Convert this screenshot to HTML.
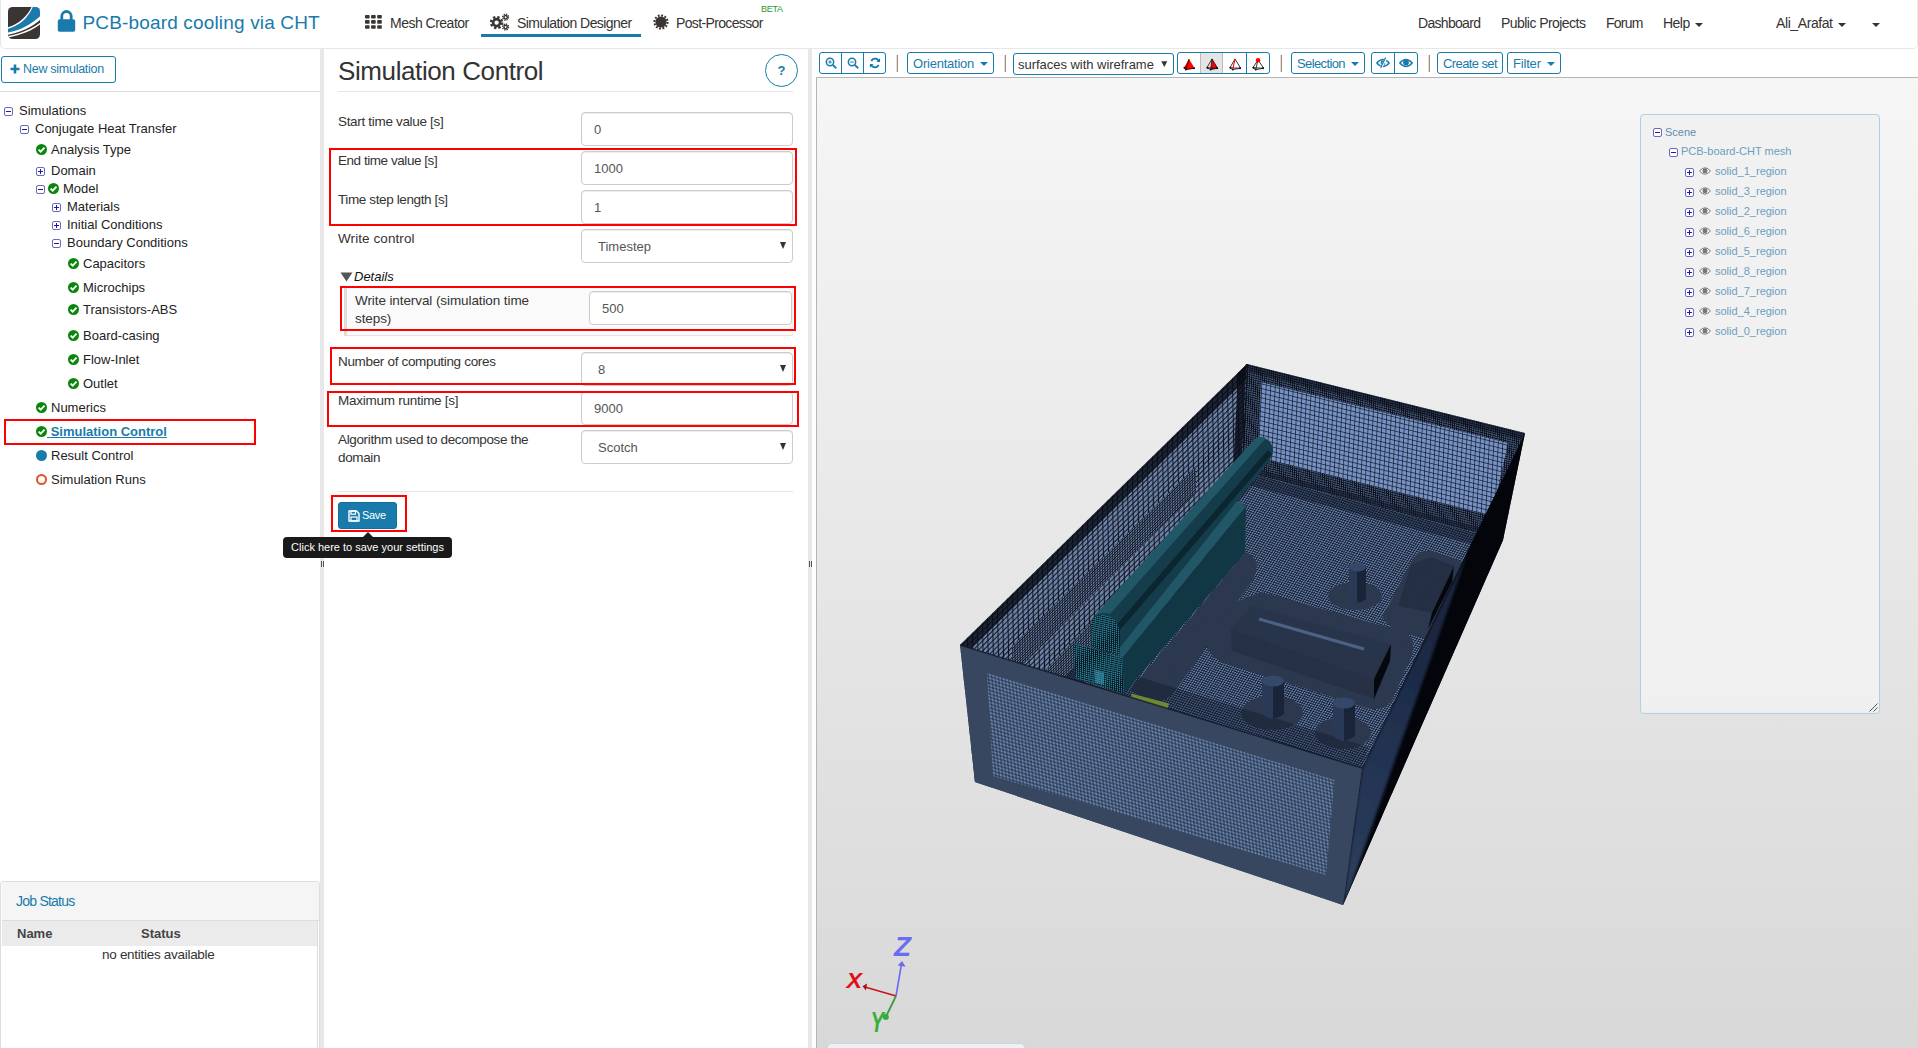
<!DOCTYPE html>
<html>
<head>
<meta charset="utf-8">
<title>SimScale</title>
<style>
*{box-sizing:border-box;margin:0;padding:0}
html,body{width:1918px;height:1048px;overflow:hidden;background:#fff;font-family:"Liberation Sans",sans-serif;font-size:13px;color:#333}
.abs{position:absolute}
#hdr{position:absolute;left:0;top:0;width:1918px;height:49px;background:#fff;border:1px solid #e7e7e7;border-top:none;border-radius:0 0 5px 5px}
.nav{position:absolute;top:14px;font-size:14px;color:#333;white-space:nowrap;line-height:18px;letter-spacing:-0.35px}
.blue{color:#187bab}
#title{position:absolute;left:82.5px;top:10px;font-size:19px;line-height:26px;color:#187bab;white-space:nowrap;letter-spacing:0.16px}
.caret{position:absolute;width:0;height:0;border-left:4px solid transparent;border-right:4px solid transparent;border-top:4px solid #333}
/* left panel */
#split1{position:absolute;left:320px;top:49px;width:4px;height:999px;background:#e8e8e8}
#split2{position:absolute;left:808px;top:49px;width:4px;height:999px;background:#e8e8e8}
.tr{position:absolute;white-space:nowrap;font-size:13px;line-height:16px;color:#222}
.ex{position:absolute;width:9px;height:9px;border:1px solid #6a6ab8;border-radius:2px;background:#fff}
.ex:before{content:"";position:absolute;left:1px;top:3px;width:5px;height:1px;background:#1a1ab0}
.ex.p:after{content:"";position:absolute;left:3px;top:1px;width:1px;height:5px;background:#1a1ab0}
.ck{position:absolute;width:11px;height:11px;border-radius:50%;background:#0a8a0a}
.red{position:absolute;border:2px solid #f00}
/* form */
.lb{position:absolute;margin-top:1px;left:338px;font-size:13.5px;line-height:18px;color:#333;letter-spacing:-0.3px;white-space:nowrap}
.in{position:absolute;left:581px;width:212px;height:34px;border:1px solid #ccc;border-radius:4px;background:#fff;box-shadow:inset 0 1px 1px rgba(0,0,0,.075);font-size:13px;line-height:33px;padding-left:12px;color:#555}
.sel{padding-left:16px}
.sel:after{content:"";position:absolute;right:6px;top:12px;border-left:3.5px solid transparent;border-right:3.5px solid transparent;border-top:7px solid #333}
/* toolbar */
.tb{position:absolute;top:52px;height:22px;border:1px solid #187bab;border-radius:3px;background:#fff;color:#187bab;font-size:13px;line-height:22px;white-space:nowrap;letter-spacing:-0.1px}
.sep{position:absolute;top:55px;width:2px;height:17px;background:linear-gradient(90deg,#fbdcb4 50%,#908ca6 50%)}
.st{position:absolute;white-space:nowrap;font-size:11px;line-height:14px;color:#6a9fc0}
</style>
</head>
<body>
<!-- HEADER -->
<div id="hdr"></div>
<div id="title">PCB-board cooling via CHT</div>
<div class="nav" style="left:390px;letter-spacing:-0.51px">Mesh Creator</div>
<div class="nav" style="left:517px;letter-spacing:-0.56px">Simulation Designer</div>
<div class="abs" style="left:481px;top:34px;width:160px;height:3px;background:#187bab"></div>
<div class="nav" style="left:676px;letter-spacing:-0.64px">Post-Processor</div>
<div class="abs" style="left:761px;top:4px;font-size:9px;line-height:10px;color:#2a9a2a;letter-spacing:-0.26px">BETA</div>
<div class="nav" style="left:1418px;letter-spacing:-0.69px">Dashboard</div>
<div class="nav" style="left:1501px;letter-spacing:-0.55px">Public Projects</div>
<div class="nav" style="left:1606px;letter-spacing:-0.79px">Forum</div>
<div class="nav" style="left:1663px;letter-spacing:-0.53px">Help</div>
<div class="caret" style="left:1695px;top:23px"></div>
<div class="nav" style="left:1776px;letter-spacing:-0.41px">Ali_Arafat</div>
<div class="caret" style="left:1838px;top:23px"></div>
<div class="caret" style="left:1872px;top:23px"></div>


<!-- HEADER ICONS -->
<svg class="abs" style="left:8px;top:7px" width="32" height="32" viewBox="0 0 32 32">
<defs><clipPath id="lg"><rect x="0" y="0" width="32" height="32" rx="4.5"/></clipPath></defs>
<g clip-path="url(#lg)"><rect width="32" height="32" fill="#3a3533"/>
<path d="M0 20.300 C10 17.500 19 10 23.500 0 L32 0 L32 13 C24 20 12 25.500 0 27.800 Z" fill="#fff"/>
<path d="M0 21.800 C10.500 19 20 11.500 24.800 0 L32 0 L32 9.300 C23 17.500 12 23.500 0 25.600 Z" fill="#187bab"/>
<path d="M0 29 C13 26.500 25 21.500 32 15.800 L32 17.400 C25 23 13 28 0 30.400 Z" fill="#fff"/>
</g></svg>
<svg class="abs" style="left:56.5px;top:9px" width="19" height="24" viewBox="0 0 19 24"><path d="M4.8 11 V7.2 A4.7 4.7 0 0 1 14.2 7.2 V11" fill="none" stroke="#187bab" stroke-width="2.8"/><rect x="0.8" y="10.2" width="17.4" height="12.6" rx="1.8" fill="#187bab"/></svg>
<svg class="abs" style="left:365px;top:15px" width="17" height="14" viewBox="0 0 17 14"><g fill="#3a3533"><rect x="0" y="0" width="4.6" height="3.6" rx=".8"/><rect x="6.1" y="0" width="4.6" height="3.6" rx=".8"/><rect x="12.2" y="0" width="4.6" height="3.6" rx=".8"/><rect x="0" y="5.1" width="4.6" height="3.6" rx=".8"/><rect x="6.1" y="5.1" width="4.6" height="3.6" rx=".8"/><rect x="12.2" y="5.1" width="4.6" height="3.6" rx=".8"/><rect x="0" y="10.2" width="4.6" height="3.6" rx=".8"/><rect x="6.1" y="10.2" width="4.6" height="3.6" rx=".8"/><rect x="12.2" y="10.2" width="4.6" height="3.6" rx=".8"/></g></svg>
<svg class="abs" style="left:490px;top:13px" width="20" height="18" viewBox="0 0 20 18">
<g fill="none" stroke="#3a3533"><circle cx="6.6" cy="9.6" r="3.5" stroke-width="2.6"/><circle cx="6.6" cy="9.6" r="5.6" stroke-width="2.2" stroke-dasharray="2.4 2"/>
<circle cx="15.6" cy="4.2" r="1.7" stroke-width="1.5"/><circle cx="15.6" cy="4.2" r="3" stroke-width="1.3" stroke-dasharray="1.3 1.05"/>
<circle cx="15.6" cy="14" r="1.7" stroke-width="1.5"/><circle cx="15.6" cy="14" r="3" stroke-width="1.3" stroke-dasharray="1.3 1.05"/></g></svg>
<svg class="abs" style="left:653px;top:14px" width="16" height="16" viewBox="0 0 16 16"><circle cx="8" cy="8" r="5.6" fill="#3a3533"/><circle cx="8" cy="8" r="6.6" fill="none" stroke="#3a3533" stroke-width="2" stroke-dasharray="1.9 1.55"/></svg>
<svg class="abs" style="left:10px;top:64px" width="10" height="10"><path d="M5 0.5 V9.5 M0.5 5 H9.5" stroke="#187bab" stroke-width="2.6"/></svg>

<!-- LEFT PANEL -->
<div class="abs blue" style="left:1px;top:56px;width:115px;height:27px;border:1px solid #187bab;border-radius:3px;font-size:12.5px;line-height:25px;padding-left:21px;letter-spacing:-0.28px">New simulation</div>
<div class="abs" style="left:0;top:91px;width:320px;height:1px;background:#ddd"></div>
<div id="split1"></div>
<div id="split2"></div>

<!-- TREE -->
<div class="ex" style="left:4px;top:107px"></div>
<div class="tr" style="left:19px;top:103px">Simulations</div>
<div class="ex" style="left:20px;top:125px"></div>
<div class="tr" style="left:35px;top:121px">Conjugate Heat Transfer</div>
<svg class="abs" style="left:36px;top:144px" width="11" height="11" viewBox="0 0 11 11"><circle cx="5.5" cy="5.5" r="5.5" fill="#0b860b"/><path d="M2.6 5.6 L4.7 7.6 L8.5 3.7" fill="none" stroke="#fff" stroke-width="1.9"/></svg>
<div class="tr" style="left:51px;top:142px">Analysis Type</div>
<div class="ex p" style="left:36px;top:167px"></div>
<div class="tr" style="left:51px;top:163px">Domain</div>
<div class="ex" style="left:36px;top:185px"></div>
<svg class="abs" style="left:48px;top:183px" width="11" height="11" viewBox="0 0 11 11"><circle cx="5.5" cy="5.5" r="5.5" fill="#0b860b"/><path d="M2.6 5.6 L4.7 7.6 L8.5 3.7" fill="none" stroke="#fff" stroke-width="1.9"/></svg>
<div class="tr" style="left:63px;top:181px">Model</div>
<div class="ex p" style="left:52px;top:203px"></div>
<div class="tr" style="left:67px;top:199px">Materials</div>
<div class="ex p" style="left:52px;top:221px"></div>
<div class="tr" style="left:67px;top:217px">Initial Conditions</div>
<div class="ex" style="left:52px;top:239px"></div>
<div class="tr" style="left:67px;top:235px">Boundary Conditions</div>
<svg class="abs" style="left:68px;top:258px" width="11" height="11" viewBox="0 0 11 11"><circle cx="5.5" cy="5.5" r="5.5" fill="#0b860b"/><path d="M2.6 5.6 L4.7 7.6 L8.5 3.7" fill="none" stroke="#fff" stroke-width="1.9"/></svg>
<div class="tr" style="left:83px;top:256px">Capacitors</div>
<svg class="abs" style="left:68px;top:282px" width="11" height="11" viewBox="0 0 11 11"><circle cx="5.5" cy="5.5" r="5.5" fill="#0b860b"/><path d="M2.6 5.6 L4.7 7.6 L8.5 3.7" fill="none" stroke="#fff" stroke-width="1.9"/></svg>
<div class="tr" style="left:83px;top:280px">Microchips</div>
<svg class="abs" style="left:68px;top:304px" width="11" height="11" viewBox="0 0 11 11"><circle cx="5.5" cy="5.5" r="5.5" fill="#0b860b"/><path d="M2.6 5.6 L4.7 7.6 L8.5 3.7" fill="none" stroke="#fff" stroke-width="1.9"/></svg>
<div class="tr" style="left:83px;top:302px">Transistors-ABS</div>
<svg class="abs" style="left:68px;top:330px" width="11" height="11" viewBox="0 0 11 11"><circle cx="5.5" cy="5.5" r="5.5" fill="#0b860b"/><path d="M2.6 5.6 L4.7 7.6 L8.5 3.7" fill="none" stroke="#fff" stroke-width="1.9"/></svg>
<div class="tr" style="left:83px;top:328px">Board-casing</div>
<svg class="abs" style="left:68px;top:354px" width="11" height="11" viewBox="0 0 11 11"><circle cx="5.5" cy="5.5" r="5.5" fill="#0b860b"/><path d="M2.6 5.6 L4.7 7.6 L8.5 3.7" fill="none" stroke="#fff" stroke-width="1.9"/></svg>
<div class="tr" style="left:83px;top:352px">Flow-Inlet</div>
<svg class="abs" style="left:68px;top:378px" width="11" height="11" viewBox="0 0 11 11"><circle cx="5.5" cy="5.5" r="5.5" fill="#0b860b"/><path d="M2.6 5.6 L4.7 7.6 L8.5 3.7" fill="none" stroke="#fff" stroke-width="1.9"/></svg>
<div class="tr" style="left:83px;top:376px">Outlet</div>
<svg class="abs" style="left:36px;top:402px" width="11" height="11" viewBox="0 0 11 11"><circle cx="5.5" cy="5.5" r="5.5" fill="#0b860b"/><path d="M2.6 5.6 L4.7 7.6 L8.5 3.7" fill="none" stroke="#fff" stroke-width="1.9"/></svg>
<div class="tr" style="left:51px;top:400px">Numerics</div>
<svg class="abs" style="left:36px;top:426px" width="11" height="11" viewBox="0 0 11 11"><circle cx="5.5" cy="5.5" r="5.5" fill="#0b860b"/><path d="M2.6 5.6 L4.7 7.6 L8.5 3.7" fill="none" stroke="#fff" stroke-width="1.9"/></svg>
<div class="tr" style="left:47px;top:424px;color:#187bab;font-weight:bold;text-decoration:underline"><span style="white-space:pre"> </span>Simulation Control</div>
<div class="abs" style="left:36px;top:450px;width:11px;height:11px;border-radius:50%;background:#187bab"></div>
<div class="tr" style="left:51px;top:448px">Result Control</div>
<div class="abs" style="left:36px;top:474px;width:11px;height:11px;border-radius:50%;border:2px solid #e0522a;background:#fff"></div>
<div class="tr" style="left:51px;top:472px">Simulation Runs</div>
<div class="red" style="left:4px;top:419px;width:252px;height:26px"></div>
<!-- JOB STATUS -->
<div class="abs" style="left:0px;top:881px;width:320px;height:167px;border:1px solid #ddd;border-bottom:none;border-radius:4px 4px 0 0;background:#fff"></div>
<div class="abs" style="left:2px;top:882px;width:317px;height:39px;background:#f5f5f5;border-bottom:1px solid #ddd;border-radius:3px 3px 0 0"></div>
<div class="abs blue" style="left:16px;top:892px;font-size:14px;line-height:18px;letter-spacing:-0.77px;white-space:nowrap">Job Status</div>
<div class="abs" style="left:2px;top:921px;width:315px;height:25px;background:#ebebeb"></div>
<div class="abs" style="left:317px;top:921px;width:1px;height:127px;background:#ddd"></div>
<div class="abs" style="left:17px;top:926px;font-size:13px;line-height:16px;font-weight:bold;color:#444">Name</div>
<div class="abs" style="left:141px;top:926px;font-size:13px;line-height:16px;font-weight:bold;color:#444">Status</div>
<div class="abs" style="left:102px;top:946px;font-size:13.5px;line-height:18px;letter-spacing:-0.29px;white-space:nowrap;color:#333">no entities available</div>

<!-- FORM -->
<div class="abs" style="left:338px;top:54px;font-size:26px;line-height:34px;color:#333;white-space:nowrap;letter-spacing:-0.4px">Simulation Control</div>
<div class="abs blue" style="left:765px;top:54px;width:33px;height:33px;border:1px solid #187bab;border-radius:50%;text-align:center;font-size:13px;line-height:31px;font-weight:bold">?</div>
<div class="abs" style="left:338px;top:91px;width:455px;height:1px;background:#e5e5e5"></div>


<div class="lb" style="top:112px;letter-spacing:-0.32px">Start time value [s]</div>
<div class="in" style="top:112px">0</div>
<div class="lb" style="top:151px;letter-spacing:-0.45px">End time value [s]</div>
<div class="in" style="top:151px">1000</div>
<div class="lb" style="top:190px;letter-spacing:-0.38px">Time step length [s]</div>
<div class="in" style="top:190px">1</div>
<div class="lb" style="top:229px;letter-spacing:0.08px">Write control</div>
<div class="in sel" style="top:229px">Timestep</div>
<svg class="abs" style="left:340px;top:272px" width="13" height="10"><path d="M0.5 0.5 L12.5 0.5 L6.5 9.5 Z" fill="#555"/></svg>
<div class="abs" style="left:354px;top:269px;font-size:13px;line-height:16px;font-style:italic;color:#111">Details</div>
<div class="abs" style="left:344px;top:287px;width:449px;height:49px;background:#fafafa;border-left:3px solid #ddd;border-bottom:1px solid #e3e3e3;border-right:1px solid #eee"></div>
<div class="lb" style="left:355px;top:291px;white-space:normal;width:200px;letter-spacing:-0.09px">Write interval (simulation time steps)</div>
<div class="in" style="left:589px;top:291px;width:203px">500</div>
<div class="lb" style="top:352px;letter-spacing:-0.33px">Number of computing cores</div>
<div class="in sel" style="top:352px">8</div>
<div class="lb" style="top:391px;letter-spacing:-0.26px">Maximum runtime [s]</div>
<div class="in" style="top:391px">9000</div>
<div class="lb" style="top:430px;white-space:normal;width:215px;letter-spacing:-0.35px">Algorithm used to decompose the domain</div>
<div class="in sel" style="top:430px">Scotch</div>
<div class="abs" style="left:338px;top:491px;width:455px;height:1px;background:#e5e5e5"></div>
<div class="abs" style="left:338px;top:502px;width:59px;height:27px;background:#187bab;border:1px solid #156e99;border-radius:3px;color:#fff;font-size:11px;line-height:25px;padding-left:23px;letter-spacing:-0.34px">Save</div>
<svg class="abs" style="left:348px;top:510px" width="12" height="12" viewBox="0 0 12 12"><path d="M1 1 H8.5 L11 3.5 V11 H1 Z" fill="none" stroke="#fff" stroke-width="1.4"/><rect x="3" y="1" width="4.5" height="3.2" fill="none" stroke="#fff" stroke-width="1.2"/><rect x="3" y="7" width="6" height="4" fill="none" stroke="#fff" stroke-width="1.2"/></svg>
<div class="red" style="left:329px;top:148px;width:468px;height:78px"></div>
<div class="red" style="left:340px;top:286px;width:456px;height:45px"></div>
<div class="red" style="left:330px;top:347px;width:466px;height:38px"></div>
<div class="red" style="left:327px;top:391px;width:472px;height:36px"></div>
<div class="red" style="left:331px;top:495px;width:76px;height:37px"></div>
<div class="abs" style="left:283px;top:537px;width:169px;height:21px;background:#1a1a1a;border-radius:4px;color:#fff;font-size:11px;line-height:21px;text-align:center;white-space:nowrap">Click here to save your settings</div>
<div class="abs" style="left:363px;top:532px;width:0;height:0;border-left:5px solid transparent;border-right:5px solid transparent;border-bottom:5px solid #1a1a1a"></div>
<div class="abs" style="left:321px;top:561px;width:1px;height:6px;background:#555"></div><div class="abs" style="left:323px;top:561px;width:1px;height:6px;background:#555"></div>
<div class="abs" style="left:809px;top:561px;width:1px;height:6px;background:#555"></div><div class="abs" style="left:811px;top:561px;width:1px;height:6px;background:#555"></div>


<!-- TOOLBAR -->
<div class="abs" style="left:812px;top:49px;width:1106px;height:28px;background:#fff"></div>
<div class="tb" style="left:819px;width:67px"></div>
<div class="abs" style="left:841px;top:52px;width:1px;height:22px;background:#187bab"></div>
<div class="abs" style="left:863px;top:52px;width:1px;height:22px;background:#187bab"></div>
<svg class="abs" style="left:825px;top:57px" width="12.5" height="12.5" viewBox="0 0 14 14"><circle cx="5.6" cy="5.6" r="4.1" fill="none" stroke="#187bab" stroke-width="1.7"/><path d="M8.7 8.7 L12.6 12.6" stroke="#187bab" stroke-width="2"/><path d="M3.6 5.6 H7.6 M5.6 3.6 V7.6" stroke="#187bab" stroke-width="1.1"/></svg>
<svg class="abs" style="left:847px;top:57px" width="12.5" height="12.5" viewBox="0 0 14 14"><circle cx="5.6" cy="5.6" r="4.1" fill="none" stroke="#187bab" stroke-width="1.7"/><path d="M8.7 8.7 L12.6 12.6" stroke="#187bab" stroke-width="2"/><path d="M3.6 5.6 H7.6" stroke="#187bab" stroke-width="1.1"/></svg>
<svg class="abs" style="left:869px;top:57px" width="12.5" height="12.5" viewBox="0 0 14 14"><path d="M11.2 5.2 A4.6 4.6 0 0 0 2.6 4.6" fill="none" stroke="#187bab" stroke-width="2"/><path d="M8.3 5.6 H12.4 V1.5 Z" fill="#187bab"/><path d="M2.2 8.2 A4.6 4.6 0 0 0 10.8 8.8" fill="none" stroke="#187bab" stroke-width="2"/><path d="M5.1 7.8 H1 V11.9 Z" fill="#187bab"/></svg>
<div class="sep" style="left:896px"></div>
<div class="tb" style="left:907px;width:87px;padding-left:5px;letter-spacing:-0.23px">Orientation</div>
<div class="caret" style="left:980px;top:62px;border-top-color:#187bab"></div>
<div class="sep" style="left:1004px"></div>
<div class="tb" style="left:1013px;top:53px;width:161px;height:22px;color:#333;font-size:13px;line-height:21px;letter-spacing:-0.03px;padding-left:4px;border-radius:3px">surfaces with wireframe</div>
<svg class="abs" style="left:1160.5px;top:61px" width="7" height="7"><path d="M0.3 0.3 H6.3 L3.3 6 Z" fill="#333"/></svg>
<div class="tb" style="left:1177px;width:93px"></div>
<div class="abs" style="left:1200px;top:53px;width:23px;height:20px;background:#e4e4e4;border-left:1px solid #bbb;border-right:1px solid #bbb"></div>
<div class="abs" style="left:1246px;top:52px;width:1px;height:22px;background:#187bab"></div>
<svg class="abs" style="left:1183px;top:57.5px" width="13" height="13" viewBox="0 0 14 14"><path d="M6.5 1 L1 10.5 L3 12.5 L12.5 11 Z" fill="#f00"/><path d="M6.5 1 L3 12.5 M1 10.5 L3 12.5 L12.5 11" fill="none" stroke="#200" stroke-width="1"/><circle cx="1.5" cy="10.5" r="1" fill="#111"/><circle cx="12" cy="11" r="1" fill="#111"/><circle cx="3" cy="12.5" r="1" fill="#111"/></svg>
<svg class="abs" style="left:1206px;top:57.5px" width="13" height="13" viewBox="0 0 14 14"><path d="M6.5 1 L5 12.5 L12.5 11 Z" fill="#f00"/><path d="M6.5 1 L1 10.5 L5 12.5 L12.5 11 Z M6.5 1 L5 12.5 M1 10.5 L12.5 11" fill="none" stroke="#111" stroke-width="0.9"/><circle cx="1.5" cy="10.5" r="1" fill="#111"/><circle cx="12" cy="11" r="1" fill="#111"/><circle cx="5" cy="12.5" r="1" fill="#111"/></svg>
<svg class="abs" style="left:1229px;top:57.5px" width="13" height="13" viewBox="0 0 14 14"><path d="M6.5 1 L1 10.5 L4 12.5 L12.5 11 Z M1 10.5 L12.5 11" fill="none" stroke="#111" stroke-width="0.9"/><path d="M6.5 1 L4 12.5" stroke="#f00" stroke-width="1.1"/><circle cx="1.5" cy="10.5" r="1" fill="#111"/><circle cx="12" cy="11" r="1" fill="#111"/><circle cx="4" cy="12.5" r="1" fill="#111"/></svg>
<svg class="abs" style="left:1252px;top:57.5px" width="13" height="13" viewBox="0 0 14 14"><path d="M6.5 2 L1 10.5 L4 12.5 L12.5 11 Z M6.5 2 L4 12.5 M1 10.5 L12.5 11" fill="none" stroke="#111" stroke-width="0.9"/><circle cx="6.5" cy="2.5" r="2.4" fill="#f00"/><circle cx="1.5" cy="10.5" r="1" fill="#111"/><circle cx="12" cy="11" r="1" fill="#111"/><circle cx="4" cy="12.5" r="1" fill="#111"/></svg>
<div class="sep" style="left:1280px"></div>
<div class="tb" style="left:1291px;width:74px;padding-left:5px;letter-spacing:-0.62px">Selection</div>
<div class="caret" style="left:1351px;top:62px;border-top-color:#187bab"></div>
<div class="tb" style="left:1371px;width:47px"></div>
<div class="abs" style="left:1394px;top:52px;width:1px;height:22px;background:#187bab"></div>
<svg class="abs" style="left:1376px;top:57px" width="14" height="12" viewBox="0 0 14 12"><path d="M0.8 6 Q7 -1 13.2 6 Q7 13 0.8 6 Z" fill="none" stroke="#187bab" stroke-width="1.3"/><circle cx="7" cy="6" r="2.4" fill="#187bab"/><path d="M10.5 0.5 L4.5 11.5" stroke="#fff" stroke-width="2.4"/><path d="M9.6 0.6 L4.6 11" stroke="#187bab" stroke-width="1.2"/></svg>
<svg class="abs" style="left:1399px;top:57px" width="14" height="12" viewBox="0 0 14 12"><path d="M0.8 6 Q7 -1 13.2 6 Q7 13 0.8 6 Z" fill="none" stroke="#187bab" stroke-width="1.4"/><circle cx="7" cy="5.6" r="2.9" fill="#187bab"/></svg>
<div class="sep" style="left:1428px"></div>
<div class="tb" style="left:1437px;width:66px;padding-left:5px;letter-spacing:-0.6px">Create set</div>
<div class="tb" style="left:1507px;width:54px;padding-left:5px;letter-spacing:-0.18px">Filter</div>
<div class="caret" style="left:1547px;top:62px;border-top-color:#187bab"></div>

<!-- VIEWER -->
<div class="abs" id="canvas" style="left:816px;top:77px;width:1102px;height:971px;border:1px solid #b5b5b5;border-right:none;border-bottom:none;background:linear-gradient(#f6f6f6,#d8d8d8)"></div>
<!-- AXES -->
<svg class="abs" style="left:0;top:0" width="1918" height="1048" viewBox="0 0 1918 1048">
<path d="M896 996 L901.5 964" stroke="#6b6bf0" stroke-width="1.6"/><path d="M897.6 965.5 L902 961 L905.6 966.8 Z" fill="#6b6bf0"/>
<path d="M896 996 L865 987" stroke="#c8141c" stroke-width="1.6"/><path d="M867 983.5 L862.5 986.2 L866 990.5 Z" fill="#b01018"/>
<path d="M896 996 L886.5 1015.5" stroke="#3a9e3a" stroke-width="1.8"/><circle cx="885.8" cy="1017" r="3" fill="#3aa83a"/>
<text transform="translate(894 955.5) scale(1 1.02)" font-family="Liberation Sans, sans-serif" font-weight="bold" font-style="italic" font-size="28" fill="#6b6bf5" textLength="17" lengthAdjust="spacingAndGlyphs">Z</text>
<text transform="translate(846.5 988.3)" font-family="Liberation Sans, sans-serif" font-weight="bold" font-style="italic" font-size="22.500" fill="#e01018" textLength="15.500" lengthAdjust="spacingAndGlyphs">X</text>
<text transform="translate(870.5 1032) scale(1 1.28)" font-family="Liberation Sans, sans-serif" font-weight="bold" font-style="italic" font-size="23" fill="#38b038" textLength="13.500" lengthAdjust="spacingAndGlyphs">Y</text>
</svg>
<div class="abs" style="left:827px;top:1043px;width:198px;height:10px;border:1px solid #bcdcea;border-radius:4px 4px 0 0;background:#f0f0f0"></div>
<!-- MODEL -->
<svg class="abs" style="left:0;top:0" width="1918" height="1048" viewBox="0 0 1918 1048">
<defs>
<pattern id="gF" width="3.6" height="3.6" patternUnits="userSpaceOnUse" patternTransform="matrix(0.956 0.293 0.109 0.994 960 645)"><rect width="3.6" height="3.6" fill="#6783b1"/><path d="M0 1.8 H3.6 M1.8 0 V3.6" stroke="#0d1118" stroke-width="0.68"/></pattern>
<pattern id="gFd" width="2.0" height="2.0" patternUnits="userSpaceOnUse" patternTransform="matrix(0.956 0.293 0.109 0.994 960 645)"><rect width="2.0" height="2.0" fill="#6680ad"/><path d="M0 1.0 H2.0 M1.0 0 V2.0" stroke="#0b0f16" stroke-width="0.61"/></pattern>
<pattern id="gB" width="4.6" height="4.6" patternUnits="userSpaceOnUse" patternTransform="matrix(0.97 0.242 -0.05 0.998 1247 364)"><rect width="4.6" height="4.6" fill="#7692c4"/><path d="M0 2.3 H4.6 M2.3 0 V4.6" stroke="#0e1320" stroke-width="0.67"/></pattern>
<pattern id="gBd" width="2.2" height="2.2" patternUnits="userSpaceOnUse" patternTransform="matrix(0.97 0.242 -0.05 0.998 1247 364)"><rect width="2.2" height="2.2" fill="#6a86b6"/><path d="M0 1.1 H2.2 M1.1 0 V2.2" stroke="#0a0e18" stroke-width="0.98"/></pattern>
<pattern id="gL" width="7.0" height="5.0" patternUnits="userSpaceOnUse" patternTransform="matrix(0.714 -0.7 0.02 1 960 645)"><rect width="7.0" height="5.0" fill="#6c82a8"/><path d="M0 2.5 H7.0 M3.5 0 V5.0" stroke="#0c1018" stroke-width="1.45"/></pattern>
<pattern id="gLd" width="3.5" height="2.5" patternUnits="userSpaceOnUse" patternTransform="matrix(0.714 -0.7 0.02 1 960 645)"><rect width="3.5" height="2.5" fill="#667ba0"/><path d="M0 1.25 H3.5 M1.75 0 V2.5" stroke="#090c14" stroke-width="1.0"/></pattern>
<pattern id="gG" width="2.4" height="2.4" patternUnits="userSpaceOnUse" patternTransform="matrix(0.95 0.31 -0.55 0.83 1241 471)"><rect width="2.4" height="2.4" fill="#6480ae"/><path d="M0 1.2 H2.4 M1.2 0 V2.4" stroke="#0b0f18" stroke-width="0.65"/></pattern>
<pattern id="gGd" width="1.7" height="1.7" patternUnits="userSpaceOnUse" patternTransform="matrix(0.95 0.31 -0.55 0.83 1241 471)"><rect width="1.7" height="1.7" fill="#607aa6"/><path d="M0 0.85 H1.7 M0.85 0 V1.7" stroke="#070a12" stroke-width="0.63"/></pattern>
<pattern id="gT" width="1.8" height="1.8" patternUnits="userSpaceOnUse" patternTransform="matrix(0.7 -0.714 0.6 0.8 1074 642)"><rect width="1.8" height="1.8" fill="#3489a3"/><path d="M0 0.9 H1.8 M0.9 0 V1.8" stroke="#05161c" stroke-width="0.46"/></pattern>
<pattern id="gTd" width="1.8" height="1.8" patternUnits="userSpaceOnUse" patternTransform="matrix(0.7 -0.714 0.02 1 1074 642)"><rect width="1.8" height="1.8" fill="#2a748c"/><path d="M0 0.9 H1.8 M0.9 0 V1.8" stroke="#030f14" stroke-width="0.6"/></pattern>
<pattern id="gTf" width="2.1" height="2.1" patternUnits="userSpaceOnUse" patternTransform="matrix(0.97 0.23 0.02 1 1074 642)"><rect width="2.1" height="2.1" fill="#2f86a2"/><path d="M0 1.05 H2.1 M1.05 0 V2.1" stroke="#04141a" stroke-width="0.78"/></pattern>
<linearGradient id="rw" gradientUnits="userSpaceOnUse" x1="1345" y1="860" x2="1460" y2="640"><stop offset="0" stop-color="#2a3c5c"/><stop offset="0.5" stop-color="#223150"/><stop offset="1" stop-color="#1a2740"/></linearGradient>
<clipPath id="cFloor"><path d="M1241.5 471 L1503 540 L1343 905 L975 782 Z"/></clipPath>
<clipPath id="cLeft"><path d="M960 645 L1247 364 L1241.5 471 L975 782 Z"/></clipPath>
<clipPath id="cBack"><path d="M1247 364 L1525 433 L1503 540 L1241.5 471 Z"/></clipPath>
<clipPath id="cRight"><path d="M1525 433 L1503 540 L1343 905 L1362 768 Z"/></clipPath>
<filter id="b1" x="-20%" y="-20%" width="140%" height="140%"><feGaussianBlur stdDeviation="1.6"/></filter>
<clipPath id="cFront"><path d="M960 645 L1362 768 L1343 905 L975 782 Z"/></clipPath>
</defs>

<!-- back wall interior -->
<path d="M1247 364 L1525 433 L1503 540 L1241.5 471 Z" fill="url(#gBd)"/>
<path d="M1261 382 L1508 443 L1492 516 L1258 457 Z" fill="url(#gB)"/>
<g clip-path="url(#cBack)"><path d="M1241.5 471 L1503 540" stroke="#131b2c" stroke-width="12" opacity=".55"/>
<path d="M1247 364 L1525 433" stroke="#0a0f1a" stroke-width="14" opacity=".45"/></g>
<path d="M1247 364 L1241.5 471" stroke="#0b111e" stroke-width="2.5"/>

<!-- left wall interior -->
<path d="M960 645 L1247 364 L1241.5 471 L975 782 Z" fill="url(#gL)"/>
<g clip-path="url(#cLeft)">
<path d="M1012 646 L1196 466 L1196 492 L1012 676 Z" fill="url(#gLd)"/>
<path d="M966 752 L1240 468 L1241 480 L975 790 Z" fill="url(#gLd)"/>
<path d="M960 645 L1247 364" stroke="#0a0e18" stroke-width="21" opacity=".8"/>
<path d="M1242.5 364 L1237 475" stroke="#0a0e18" stroke-width="8" opacity=".85"/>
</g>

<!-- floor -->
<path d="M1241.5 471 L1503 540 L1343 905 L975 782 Z" fill="url(#gG)"/>
<g clip-path="url(#cFloor)">
<path d="M1241.5 471 L1503 540" stroke="#0f1626" stroke-width="24" opacity=".5"/>
<path d="M1503 540 L1343 905" stroke="#0b111e" stroke-width="50" opacity=".62"/>
<path d="M975 782 L1241.5 471" stroke="#101828" stroke-width="36" opacity=".4"/>
<path d="M1205 640 Q1200 622 1225 606 L1262 592 L1405 632 Q1418 640 1410 660 L1392 700 Q1384 712 1366 708 L1222 662 Q1208 656 1205 640 Z" fill="url(#gGd)"/>
<ellipse cx="1355" cy="596" rx="27" ry="14" fill="url(#gGd)"/>
<ellipse cx="1272" cy="713" rx="31" ry="17" fill="url(#gGd)"/>
<ellipse cx="1343" cy="733" rx="28" ry="16" fill="url(#gGd)"/>
<path d="M1382 618 L1412 560 Q1420 548 1436 552 L1462 562 L1434 640 L1396 632 Z" fill="url(#gGd)"/>
<path d="M1130 690 L1246 552 Q1262 560 1254 578 L1176 690 Q1160 712 1130 690 Z" fill="url(#gGd)"/>
<!-- band along front wall top -->
<path d="M960 645 L1362 768" stroke="#0f1626" stroke-width="44" opacity=".35"/>
</g>

<!-- long chip -->
<path d="M1231 629 L1251 606 L1391 644 L1374 679 Z" fill="url(#gGd)"/>
<path d="M1231 629 L1251 606 L1391 644 L1374 679 Z" fill="#0a0f1a" opacity=".08"/>
<path d="M1231 629 L1374 679 L1374 699 L1232 651 Z" fill="url(#gGd)"/>
<path d="M1231 629 L1374 679 L1374 699 L1232 651 Z" fill="#0a0f1a" opacity=".16"/>
<path d="M1374 679 L1391 644 L1390 661 L1374 699 Z" fill="#05080f"/>
<path d="M1259 619 L1364 649" stroke="#5b76a2" stroke-width="3" opacity=".7"/>
<!-- right box -->
<path d="M1411 565 L1430 557 L1454 566 L1432 613 L1398 606 Z" fill="url(#gGd)"/>
<path d="M1411 565 L1430 557 L1454 566 L1432 613 L1398 606 Z" fill="#0a0f1a" opacity=".2"/>
<path d="M1398 606 L1432 613 L1428 629 L1396 622 Z" fill="url(#gGd)"/>
<path d="M1432 613 L1454 566 L1452 582 L1428 629 Z" fill="#04070d"/>
<!-- cylinders -->
<path d="M1349 567 L1349 599 Q1357 606 1366 599 L1366 567 Z" fill="#1a2438"/><path d="M1349 567 L1349 599 Q1353 603 1357 603 L1357 567 Z" fill="#2a3a56"/><ellipse cx="1357.500" cy="567" rx="8.500" ry="4.500" fill="#34486a"/>
<path d="M1262 681 L1262 714 Q1273 722 1284 714 L1284 681 Z" fill="#1a2438"/><path d="M1262 681 L1262 714 Q1268 719 1273 719 L1273 681 Z" fill="#2a3a56"/><ellipse cx="1273" cy="681" rx="11" ry="5.500" fill="#34486a"/>
<path d="M1333 703 L1333 736 Q1344 744 1355 736 L1355 703 Z" fill="#1a2438"/><path d="M1333 703 L1333 736 Q1339 741 1344 741 L1344 703 Z" fill="#2a3a56"/><ellipse cx="1344" cy="703" rx="11" ry="5.500" fill="#34486a"/>

<!-- teal block -->
<path d="M1122.700 657 L1246 506 L1245 553 L1123.700 693.500 Z" fill="url(#gTd)"/>
<path d="M1122.700 657 L1246 506 L1245 553 L1123.700 693.500 Z" fill="#021016" opacity=".12"/>
<path d="M1112 652 L1236 500 L1246 506 L1122.700 657 Z" fill="url(#gT)"/>
<!-- cylinder body -->
<path d="M1092 619 L1250 446 Q1258 434 1268 440 Q1277 448 1270 460 L1119.800 647.700 Z" fill="url(#gTd)"/>
<path d="M1094 616 L1252 442 Q1259 434 1266 438 L1110 614 Q1102 611 1094 616 Z" fill="url(#gT)"/>
<path d="M1116 630 L1270 452" stroke="#041218" stroke-width="6" opacity=".5"/>
<!-- front of block -->
<path d="M1073.700 643 L1122.700 657 L1123.700 693.500 L1075 678 Z" fill="url(#gTf)"/>
<path d="M1090.300 646 L1092 619 Q1102 611 1114 619 L1119.800 628.600 L1119.800 655 Z" fill="url(#gTf)"/>
<path d="M1095 670 L1104 672.500 L1104 685 L1095 682.500 Z" fill="#48aacc" opacity=".45"/>
<!-- green -->
<path d="M1131.500 693.500 L1169 703.500 L1167.500 709 L1131 698 Z" fill="#6d8836"/>

<!-- right wall exterior -->
<path d="M1525 433 L1503 540 L1343 905 L1362 768 Z" fill="#03050a"/>
<g clip-path="url(#cRight)"><path d="M1468 552 L1362 768 L1343 905 L1346 900 L1364 849 L1397 754 L1431 658 L1464 563 Z" fill="url(#rw)" filter="url(#b1)"/></g>
<!-- front wall exterior -->
<path d="M960 645 L1362 768 L1343 905 L975 782 Z" fill="url(#gFd)"/>
<path d="M987 673 L1334.500 780 L1326 875 L993 776 Z" fill="url(#gF)"/>
<path d="M960 645 L1362 768" stroke="#0d1320" stroke-width="1.6" opacity=".7"/>
</svg>
<!-- SCENE TREE -->
<div class="abs" style="left:1640px;top:114px;width:240px;height:600px;border:1px solid #a8d4e6;border-radius:4px;background:rgba(241,241,241,0.9)"></div>
<svg class="abs" style="left:1869px;top:703px" width="9" height="9"><path d="M0.5 8.5 L8.5 0.5 M4.5 8.5 L8.5 4.5" stroke="#555" stroke-width="1"/></svg>
<div class="ex" style="left:1653px;top:128px"></div>
<div class="st" style="left:1665px;top:125px;color:#5b8fae">Scene</div>
<div class="ex" style="left:1669px;top:148px"></div>
<div class="st" style="left:1681px;top:144px">PCB-board-CHT mesh</div>
<div class="ex p" style="left:1685px;top:168px"></div>
<svg class="abs" style="left:1699px;top:167px" width="12" height="8" viewBox="0 0 12 8"><path d="M0.5 4 Q6 -2.4 11.5 4 Q6 10.4 0.5 4 Z" fill="#fff" stroke="#777" stroke-width="1"/><circle cx="6" cy="3.8" r="2.5" fill="#777"/></svg>
<div class="st" style="left:1715px;top:164px">solid_1_region</div>
<div class="ex p" style="left:1685px;top:188px"></div>
<svg class="abs" style="left:1699px;top:187px" width="12" height="8" viewBox="0 0 12 8"><path d="M0.5 4 Q6 -2.4 11.5 4 Q6 10.4 0.5 4 Z" fill="#fff" stroke="#777" stroke-width="1"/><circle cx="6" cy="3.8" r="2.5" fill="#777"/></svg>
<div class="st" style="left:1715px;top:184px">solid_3_region</div>
<div class="ex p" style="left:1685px;top:208px"></div>
<svg class="abs" style="left:1699px;top:207px" width="12" height="8" viewBox="0 0 12 8"><path d="M0.5 4 Q6 -2.4 11.5 4 Q6 10.4 0.5 4 Z" fill="#fff" stroke="#777" stroke-width="1"/><circle cx="6" cy="3.8" r="2.5" fill="#777"/></svg>
<div class="st" style="left:1715px;top:204px">solid_2_region</div>
<div class="ex p" style="left:1685px;top:228px"></div>
<svg class="abs" style="left:1699px;top:227px" width="12" height="8" viewBox="0 0 12 8"><path d="M0.5 4 Q6 -2.4 11.5 4 Q6 10.4 0.5 4 Z" fill="#fff" stroke="#777" stroke-width="1"/><circle cx="6" cy="3.8" r="2.5" fill="#777"/></svg>
<div class="st" style="left:1715px;top:224px">solid_6_region</div>
<div class="ex p" style="left:1685px;top:248px"></div>
<svg class="abs" style="left:1699px;top:247px" width="12" height="8" viewBox="0 0 12 8"><path d="M0.5 4 Q6 -2.4 11.5 4 Q6 10.4 0.5 4 Z" fill="#fff" stroke="#777" stroke-width="1"/><circle cx="6" cy="3.8" r="2.5" fill="#777"/></svg>
<div class="st" style="left:1715px;top:244px">solid_5_region</div>
<div class="ex p" style="left:1685px;top:268px"></div>
<svg class="abs" style="left:1699px;top:267px" width="12" height="8" viewBox="0 0 12 8"><path d="M0.5 4 Q6 -2.4 11.5 4 Q6 10.4 0.5 4 Z" fill="#fff" stroke="#777" stroke-width="1"/><circle cx="6" cy="3.8" r="2.5" fill="#777"/></svg>
<div class="st" style="left:1715px;top:264px">solid_8_region</div>
<div class="ex p" style="left:1685px;top:288px"></div>
<svg class="abs" style="left:1699px;top:287px" width="12" height="8" viewBox="0 0 12 8"><path d="M0.5 4 Q6 -2.4 11.5 4 Q6 10.4 0.5 4 Z" fill="#fff" stroke="#777" stroke-width="1"/><circle cx="6" cy="3.8" r="2.5" fill="#777"/></svg>
<div class="st" style="left:1715px;top:284px">solid_7_region</div>
<div class="ex p" style="left:1685px;top:308px"></div>
<svg class="abs" style="left:1699px;top:307px" width="12" height="8" viewBox="0 0 12 8"><path d="M0.5 4 Q6 -2.4 11.5 4 Q6 10.4 0.5 4 Z" fill="#fff" stroke="#777" stroke-width="1"/><circle cx="6" cy="3.8" r="2.5" fill="#777"/></svg>
<div class="st" style="left:1715px;top:304px">solid_4_region</div>
<div class="ex p" style="left:1685px;top:328px"></div>
<svg class="abs" style="left:1699px;top:327px" width="12" height="8" viewBox="0 0 12 8"><path d="M0.5 4 Q6 -2.4 11.5 4 Q6 10.4 0.5 4 Z" fill="#fff" stroke="#777" stroke-width="1"/><circle cx="6" cy="3.8" r="2.5" fill="#777"/></svg>
<div class="st" style="left:1715px;top:324px">solid_0_region</div>
</body>
</html>
